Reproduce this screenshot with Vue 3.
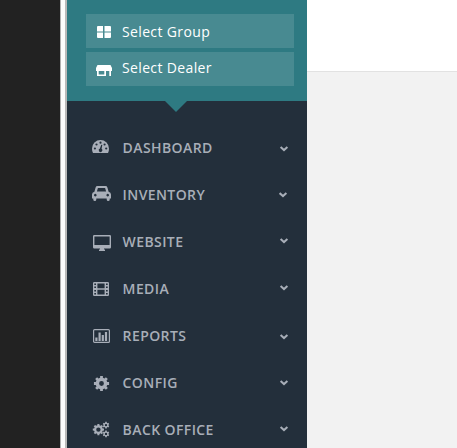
<script setup>
const items = [
  { label: 'DASHBOARD', icon: 'gauge', x: 0.5, y: 8 },
  { label: 'INVENTORY', icon: 'car', x: -0.5, y: 7 },
  { label: 'WEBSITE', icon: 'monitor', x: 0.5, y: 6 },
  { label: 'MEDIA', icon: 'film', x: 0.5, y: 6 },
  { label: 'REPORTS', icon: 'chart', x: 0.5, y: 8 },
  { label: 'CONFIG', icon: 'gear', x: 0.5, y: 7 },
  { label: 'BACK OFFICE', icon: 'gears', x: 0.5, y: 6 },
]

// Outline of a cog centred on (cx, cy) with n teeth
function cog(cx, cy, outer, inner, n) {
  const step = (Math.PI * 2) / n
  const pts = []
  for (let i = 0; i < n; i++) {
    const a = i * step - Math.PI / 2
    for (const [r, t] of [[inner, -0.3], [outer, -0.23], [outer, 0.23], [inner, 0.3]]) {
      pts.push(`${(cx + r * Math.cos(a + t * step)).toFixed(2)} ${(cy + r * Math.sin(a + t * step)).toFixed(2)}`)
    }
  }
  return `M${pts.join('L')}Z`
}

function hole(cx, cy, r) {
  return `M${cx - r} ${cy}a${r} ${r} 0 1 0 ${2 * r} 0a${r} ${r} 0 1 0 ${-2 * r} 0Z`
}

const gear = cog(9.5, 10.5, 7.7, 5.9, 8) + hole(9.5, 10.5, 2.4)
const gears =
  cog(6.4, 9.6, 5.7, 4.4, 8) + hole(6.4, 9.6, 2.2) +
  cog(14, 5.1, 3.4, 2.6, 6) + hole(14, 5.1, 1.2) +
  cog(14, 13.9, 3.4, 2.6, 6) + hole(14, 13.9, 1.2)
</script>

<template>
  <div class="page">
    <div class="backdrop"></div>
    <div class="edge"></div>
    <aside class="sidebar">
      <div class="selectors">
        <button class="selector" type="button">
          <svg class="selector-icon" viewBox="0 0 16 14" width="16" height="14">
            <path d="M2 1h5v5.500H1V2q0-1 1-1ZM8.500 1H14q1 0 1 1v4.500H8.500ZM1 7.500h6V13H2q-1 0-1-1ZM8.500 7.500H15V12q0 1-1 1H8.500Z" />
          </svg>
          <span>Select Group</span>
        </button>
        <button class="selector dealer" type="button">
          <svg class="selector-icon" viewBox="0 0 16 14" width="16" height="14">
            <path fill-rule="evenodd" d="M1.500 2h13L16 5v3h-1v5h-1.700V8H10v5H1V8H0V5ZM2.700 8v3.400h5.600V8Z" />
          </svg>
          <span class="selector-text">Select Dealer</span>
        </button>
      </div>
      <nav class="menu">
        <a v-for="item in items" :key="item.label" class="row">
          <svg class="icon" viewBox="0 0 20 20" width="20" height="20">
            <template v-if="item.icon === 'gauge'">
              <path d="M8.500 1.900A8.500 8.500 0 0 0 0 10.400Q0 13 1 15H16Q17 13 17 10.400A8.500 8.500 0 0 0 8.500 1.900Z" />
              <g class="cut">
                <circle cx="2.900" cy="10.500" r="1.100" />
                <circle cx="4.500" cy="6.500" r="1.100" />
                <circle cx="8.500" cy="4.700" r="1.100" />
                <circle cx="12.600" cy="6.500" r="1.100" />
                <circle cx="14.200" cy="10.500" r="1.100" />
                <path d="M9.300 6.800 10.300 7.100 9.600 10.700A1.800 1.800 0 1 1 7.900 10.500Z" />
              </g>
            </template>
            <template v-else-if="item.icon === 'car'">
              <path fill-rule="evenodd" d="M5.500 1h8Q15 1 15.400 2.400L16.600 6.800Q19 7.400 19 9.500V13.500H17.700V14.500Q17.700 16 16.200 16T14.700 14.500V13.500H4.300V14.500Q4.300 16 2.800 16T1.300 14.500V13.500H0V9.500Q0 7.400 2.400 6.800L3.600 2.400Q4 1 5.500 1ZM5.900 2.900 4.900 6.600H14.100L13.100 2.900ZM3.300 8.800a1.300 1.300 0 1 0 .01 0ZM15.700 8.800a1.300 1.300 0 1 0 .01 0Z" />
            </template>
            <template v-else-if="item.icon === 'monitor'">
              <path fill-rule="evenodd" d="M2.200 3H17.800Q19 3 19 4.200V15.300Q19 16.500 17.800 16.500H12V17.500H13V19H7V17.500H8V16.500H2.200Q1 16.500 1 15.300V4.200Q1 3 2.200 3ZM2.400 4.400V13H17.600V4.400Z" />
            </template>
            <template v-else-if="item.icon === 'film'">
              <path fill-rule="evenodd" d="M2.200 3H15.800Q17 3 17 4.200V15.800Q17 17 15.800 17H2.200Q1 17 1 15.800V4.200Q1 3 2.200 3ZM5.400 4.400V9.200H12.600V4.400ZM5.400 10.800V15.600H12.600V10.800ZM2.300 4.500V6H4V4.500ZM2.300 7.500V9H4V7.500ZM2.300 11V12.500H4V11ZM2.300 14V15.500H4V14ZM14 4.500V6H15.700V4.500ZM14 7.500V9H15.700V7.500ZM14 11V12.500H15.700V11ZM14 14V15.500H15.700V14Z" />
            </template>
            <template v-else-if="item.icon === 'chart'">
              <rect class="frame" x="1.600" y="3.600" width="15.800" height="12.800" rx="1" />
              <path d="M3.300 11.500h2.200v3.500h-2.200ZM6.500 6.500h2.200v8.500h-2.200ZM9.700 9h2.200v6h-2.200ZM12.900 6h2.200v9h-2.200Z" />
            </template>
            <path v-else-if="item.icon === 'gear'" fill-rule="evenodd" :d="gear" />
            <path v-else fill-rule="evenodd" :d="gears" />
          </svg>
          <span class="label">{{ item.label }}</span>
          <svg class="chevron" viewBox="0 0 12 20" width="12" height="20">
            <path :transform="`translate(${item.x} ${item.y})`" d="M1.100 1.100 4.500 4.100 7.900 1.100" />
          </svg>
        </a>
      </nav>
    </aside>
    <main class="content">
      <header class="topbar"></header>
    </main>
  </div>
</template>

<style>
body {
  overflow: hidden;
}
</style>

<style scoped>
.page {
  display: flex;
  height: 448px;
  overflow: hidden;
  background: #f2f2f2;
  font-family: 'Open Sans', 'Noto Sans', sans-serif;
}
.backdrop {
  width: 60px;
  background: #222;
}
.edge {
  box-sizing: border-box;
  width: 7px;
  background: #fcfcfc;
  border-left: 1px solid #b0b0b0;
  border-right: 2px solid #b9b9b9;
}
.sidebar {
  width: 240px;
  height: 448px;
  overflow: hidden;
  background: #232f3b;
}
.selectors {
  position: relative;
  box-sizing: border-box;
  display: flex;
  flex-direction: column;
  gap: 4px;
  height: 101px;
  padding: 14px 13px 0 19px;
  background: #2e7a82;
}
.selectors::after {
  content: '';
  position: absolute;
  left: 98px;
  top: 101px;
  border: 11px solid transparent;
  border-top-color: #2e7a82;
  border-bottom: 0;
}
.selector {
  display: flex;
  align-items: center;
  gap: 10px;
  height: 34px;
  padding: 2px 10px 0;
  border: 0;
  background: #488a91;
  color: #fff;
  font-family: inherit;
  font-size: 14px;
  line-height: 20px;
  letter-spacing: 0.36px;
}
.selector.dealer {
  padding-top: 0;
}
.selector-icon {
  fill: #fff;
}
.dealer .selector-icon {
  margin-top: 1px;
}
.selector-text {
  padding-bottom: 2px;
}
.menu {
  display: flex;
  flex-direction: column;
  padding-top: 23px;
}
.row {
  display: flex;
  align-items: center;
  flex: none;
  height: 47px;
  padding: 0 16px 0 25px;
  color: #a8aeb8;
  font-size: 14px;
  font-weight: 600;
  line-height: 20px;
  letter-spacing: 0.4px;
}
.icon {
  flex: none;
  fill: #a8aeb8;
}
.cut {
  fill: #232f3b;
}
.frame {
  fill: none;
  stroke: #a8aeb8;
  stroke-width: 1.2;
}
.label {
  flex: 1;
  margin-left: 10.6px;
}
.chevron {
  flex: none;
  fill: none;
  stroke: #a8aeb8;
  stroke-width: 2;
}
.content {
  flex: 1;
}
.topbar {
  height: 71px;
  background: #fff;
  border-bottom: 1px solid #e2e2e2;
}
</style>
